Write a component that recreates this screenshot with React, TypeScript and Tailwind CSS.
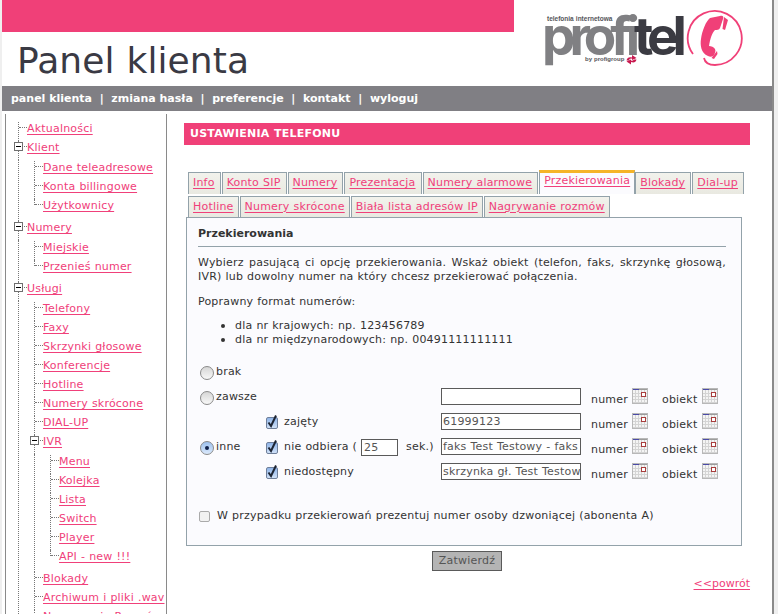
import React from "react";

const Cal = () => (
  <svg width="16" height="16" viewBox="0 0 16 16" className="block">
    <rect x="0" y="0" width="16" height="16" fill="#f4f4f4" />
    <rect x="0" y="0" width="16" height="2" fill="#9c9c9c" />
    <rect x="0" y="0" width="7" height="2" fill="#4a4aa8" />
    <path d="M0 5.5H16M0 8.5H16M0 11.5H16M0 14.5H16M3.5 2V16M6.5 2V16M9.5 2V16M12.5 2V16" stroke="#d4d4d4" strokeWidth="1" />
    <rect x="0.5" y="0.5" width="15" height="15" fill="none" stroke="#b8b8b8" />
    <rect x="9.5" y="4.5" width="4" height="4" fill="#fff" stroke="#a83c3c" />
  </svg>
);

const Box = () => (
  <span className="absolute left-0 top-[1px] z-10 flex h-[9px] w-[9px] items-center justify-center border border-[#6f6f6f] bg-white">
    <span className="h-px w-[5px] bg-black" />
  </span>
);

function Row({ label, box, last }: { label: string; box?: boolean; last?: boolean }) {
  return (
    <div className="relative h-[19px]">
      <span className={`absolute left-[4px] top-0 border-l border-dotted border-[#777] ${last ? "h-[6px]" : "h-[19px]"}`} />
      {box && <Box />}
      <span className="absolute left-[5px] top-[5px] w-[8px] border-t border-dotted border-[#777]" />
      <a className="absolute left-[13px] top-0 whitespace-nowrap leading-[14px] text-[#f0407a] underline underline-offset-[2px]">{label}</a>
    </div>
  );
}

function Group({ children, spine }: { children: React.ReactNode; spine?: boolean }) {
  return (
    <div className="relative pb-[3px] pl-[16px] pt-px">
      {spine && <span className="absolute left-[4px] top-0 h-full border-l border-dotted border-[#777]" />}
      {children}
    </div>
  );
}

const Tree = () => (
  <div className="h-[500px] overflow-hidden pl-[8px] pt-[8px]">
    <Row label="Aktualności" />
    <Row label="Klient" box />
    <Group spine>
      <Row label="Dane teleadresowe" />
      <Row label="Konta billingowe" />
      <Row label="Użytkownicy" last />
    </Group>
    <Row label="Numery" box />
    <Group spine>
      <Row label="Miejskie" />
      <Row label="Przenieś numer" last />
    </Group>
    <Row label="Usługi" box />
    <Group spine>
      <Row label="Telefony" />
      <Row label="Faxy" />
      <Row label="Skrzynki głosowe" />
      <Row label="Konferencje" />
      <Row label="Hotline" />
      <Row label="Numery skrócone" />
      <Row label="DIAL-UP" />
      <Row label="IVR" box />
      <Group spine>
        <Row label="Menu" />
        <Row label="Kolejka" />
        <Row label="Lista" />
        <Row label="Switch" />
        <Row label="Player" />
        <Row label="API - new !!!" last />
      </Group>
      <Row label="Blokady" />
      <Row label="Archiwum i pliki .wav" />
      <Row label="Nagrywanie Rozmów" />
    </Group>
  </div>
);

const Tab = ({ label, small }: { label: string; small?: boolean }) => (
  <div className={`mr-px flex items-center border border-b-0 border-[#93a2aa] bg-linear-to-b from-[#f2f2ec] to-[#e9e9e1] pl-[4px] ${small ? "h-[21px] pr-[4px]" : "h-[22px] pr-[5px]"}`}>
    <a className="text-[#f0407a] underline underline-offset-[2px]">{label}</a>
  </div>
);

const Radio = ({ on }: { on?: boolean }) => (
  <span className={`flex h-[14px] w-[14px] shrink-0 items-center justify-center rounded-full border border-[#8a8a8a] bg-linear-to-b ${on ? "from-[#9cc0ee] to-[#dbe9fb]" : "from-[#d6d6d6] to-[#f8f8f8]"}`}>
    {on && <span className="h-[4px] w-[4px] rounded-full bg-[#10204a]" />}
  </span>
);

const Check = () => (
  <span className="flex h-[12px] w-[12px] shrink-0 items-center justify-center rounded-[2px] border border-[#6f7f9a] bg-linear-to-b from-[#8fb4e8] to-[#cfe0f7]">
    <svg width="12" height="12" viewBox="0 0 12 12" className="overflow-visible">
      <path d="M2.5 5.5L5 9L10 -1.5" fill="none" stroke="#1c2433" strokeWidth="2" />
    </svg>
  </span>
);

const Field = ({ value }: { value?: string }) => (
  <div className="h-[17px] w-[140px] shrink-0 overflow-hidden whitespace-nowrap border border-[#5a5a5a] bg-white px-[1px] leading-[15px] text-[#555]">{value}</div>
);

const Pick = () => (
  <div className="ml-[10px] flex items-start">
    <span className="mt-[4px] w-[41px]">numer</span>
    <Cal />
    <span className="ml-[14px] mt-[4px] w-[40px]">obiekt</span>
    <Cal />
  </div>
);

const FormRow = ({ left, value }: { left: React.ReactNode; value?: string }) => (
  <div className="flex h-[25px] items-start">
    <div className="flex h-[19px] w-[243px] shrink-0 items-center">{left}</div>
    <Field value={value} />
    <Pick />
  </div>
);

export default function App() {
  return (
    <div className="h-[614px] overflow-hidden bg-[#efefef] font-['DejaVu_Sans',sans-serif] text-[11px] tracking-[0.2px] text-[#333] [word-spacing:0.3px]">
      <div className="ml-[2px] h-[614px] w-[772px] overflow-hidden border-r-2 border-[#8a8a8a] bg-white">
        <header className="relative h-[86px]">
          <div className="h-[32px] w-[512px] bg-[#f04078]" />
          <h1 className="ml-[15px] mt-[8px] text-[36px] leading-[42px] tracking-[0.1px] text-[#3a3a44]">Panel klienta</h1>
          <div className="absolute left-[543px] top-[8px] h-[60px] w-[205px] tracking-normal">
            <span className="absolute left-[2px] top-[7px] z-10 font-['Liberation_Sans',sans-serif] text-[6.5px] font-bold leading-[8px] text-[#55555a]">telefonia internetowa</span>
            <span className="absolute left-[-3px] top-[-3px] font-['Inter',sans-serif] text-[53px] font-bold leading-[62px] tracking-[-6px] text-[#808083]">
              profi<span className="text-[#3b3b42]">tel</span>
            </span>
            <span className="absolute left-[40px] top-[47px] font-['Liberation_Sans',sans-serif] text-[6px] font-bold leading-[8px] text-[#55555a]">by profigroup</span>
            <svg className="absolute left-[81px] top-[46px]" width="11" height="11" viewBox="0 0 11 11">
              <path d="M0.5 6.5C1 3.5 3.5 2.5 6 3.5V1L10.5 4L6 6V4.8C4.5 4.2 3.5 5 3 6.5Z" fill="#c8194f" />
              <path d="M10.5 5.5C10 8.5 7.5 9 5 8V10.5L0.5 7.5L5 5.5V6.5C6.5 7 7.5 6.5 8 5.5Z" fill="#c8194f" />
            </svg>
            <svg className="absolute left-[141px] top-[1px]" width="58" height="58" viewBox="0 0 58 58">
              <path d="M7 45A27 27 0 1 1 29 56C24 56 19 54 18 49" fill="none" stroke="#f04078" strokeWidth="1.8" />
              <path d="M24 9L34 7C37 6 38 8 37 10L34 19C33 21 31 21 29 21C26 24 24 30 23 37C25 37 28 38 29 40C30 42 29 44 28 46C27 48 24 48 22 47C15 44 14 36 15 30C16 22 20 12 24 9Z" fill="#f04078" />
              <path d="M38 8L42 11L39 21L36.5 20Z" fill="#f04078" />
              <path d="M31 42L31.5 45L28 50L25.5 49Z" fill="#f04078" />
            </svg>
          </div>
        </header>
        <nav className="flex h-[25px] items-center whitespace-pre bg-[#807f84] pl-[9px] pt-px text-[11px] font-bold tracking-normal text-white [word-spacing:0]">
          panel klienta  |  zmiana hasła  |  preferencje  |  kontakt  |  wyloguj
        </nav>
        <div className="flex">
          <aside className="ml-[3px] mt-[3px] h-[500px] w-[162px] shrink-0 border-x border-[#8a8a8a]">
            <Tree />
          </aside>
          <main className="ml-[17px] w-[566px] shrink-0">
            <div className="mt-[12px] flex h-[22px] items-center bg-[#f04078] pl-[6px] font-bold tracking-[0.25px] text-white">USTAWIENIA TELEFONU</div>
            <div className="mt-[25px] flex items-end pl-[4px]">
              {["Info", "Konto SIP", "Numery", "Prezentacja", "Numery alarmowe"].map((t) => <Tab key={t} label={t} />)}
              <div className="flex h-[24px] items-start border border-b-0 border-t-[3px] border-[#93a2aa] border-t-[#f5b428] bg-[#fbfbfe] px-[4px]">
                <a className="text-[#f0407a] underline underline-offset-[2px]">Przekierowania</a>
              </div>
              <Tab label="Blokady" />
              <Tab label="Dial-up" />
            </div>
            <div className="mt-[2px] flex items-end pl-[4px]">
              {["Hotline", "Numery skrócone", "Biała lista adresów IP", "Nagrywanie rozmów"].map((t) => <Tab key={t} label={t} small />)}
            </div>
            <section className="ml-[2px] h-[329px] w-[556px] border border-[#93a2aa] bg-[#fbfbfe] pl-[11px] pr-[15px]">
              <h2 className="mt-[8px] border-b border-[#93a2aa] pb-[5px] pt-px text-[11px] font-bold leading-[14px] tracking-normal">Przekierowania</h2>
              <p className="mt-[9px] text-justify leading-[14px]">
                Wybierz pasującą ci opcję przekierowania. Wskaż obiekt (telefon, faks, skrzynkę głosową, IVR) lub dowolny numer na który chcesz przekierować połączenia.
              </p>
              <p className="mt-[11px] leading-[14px]">Poprawny format numerów:</p>
              <ul className="ml-[23px] mt-[10px] list-none leading-[14px]">
                <li className="flex items-center"><span className="mr-[10px] h-[4px] w-[4px] rounded-full bg-[#333]" />dla nr krajowych: np. 123456789</li>
                <li className="flex items-center"><span className="mr-[10px] h-[4px] w-[4px] rounded-full bg-[#333]" />dla nr międzynarodowych: np. 00491111111111</li>
              </ul>
              <div className="mb-[3px] ml-[2px] mt-[13px] flex h-[25px] items-center gap-[2px]"><Radio /><span>brak</span></div>
              <FormRow left={<><span className="ml-[2px]"><Radio /></span><span className="ml-[2px]">zawsze</span></>} />
              <FormRow left={<span className="ml-[68px] flex items-center gap-[6px]"><Check />zajęty</span>} value="61999123" />
              <FormRow
                left={
                  <>
                    <span className="ml-[2px]"><Radio on /></span>
                    <span className="ml-[2px] w-[50px]">inne</span>
                    <Check />
                    <span className="ml-[6px] w-[77px] whitespace-pre">nie odbiera (</span>
                    <span className="h-[17px] w-[37px] border border-[#5a5a5a] bg-white px-[2px] leading-[15px] text-[#555]">25</span>
                    <span className="ml-[8px]">sek.)</span>
                  </>
                }
                value="faks Test Testowy - faks"
              />
              <FormRow left={<span className="ml-[68px] flex items-center gap-[6px]"><Check />niedostępny</span>} value="skrzynka gł. Test Testowy" />
              <div className="ml-px mt-[20px] flex items-center gap-[7px]">
                <span className="h-[11px] w-[11px] rounded-[2px] border border-[#aaa] bg-[#f2f2f2]" />
                W przypadku przekierowań prezentuj numer osoby dzwoniącej (abonenta A)
              </div>
            </section>
            <div className="mt-[5px] flex justify-center">
              <button className="h-[20px] w-[70px] border border-[#5a5a5a] bg-[#b4b4b4] text-[11px] text-[#555]">Zatwierdź</button>
            </div>
            <div className="mt-[5px] text-right tracking-normal"><a className="text-[#f0407a] underline underline-offset-[2px]">&lt;&lt;powrót</a></div>
          </main>
        </div>
      </div>
    </div>
  );
}
